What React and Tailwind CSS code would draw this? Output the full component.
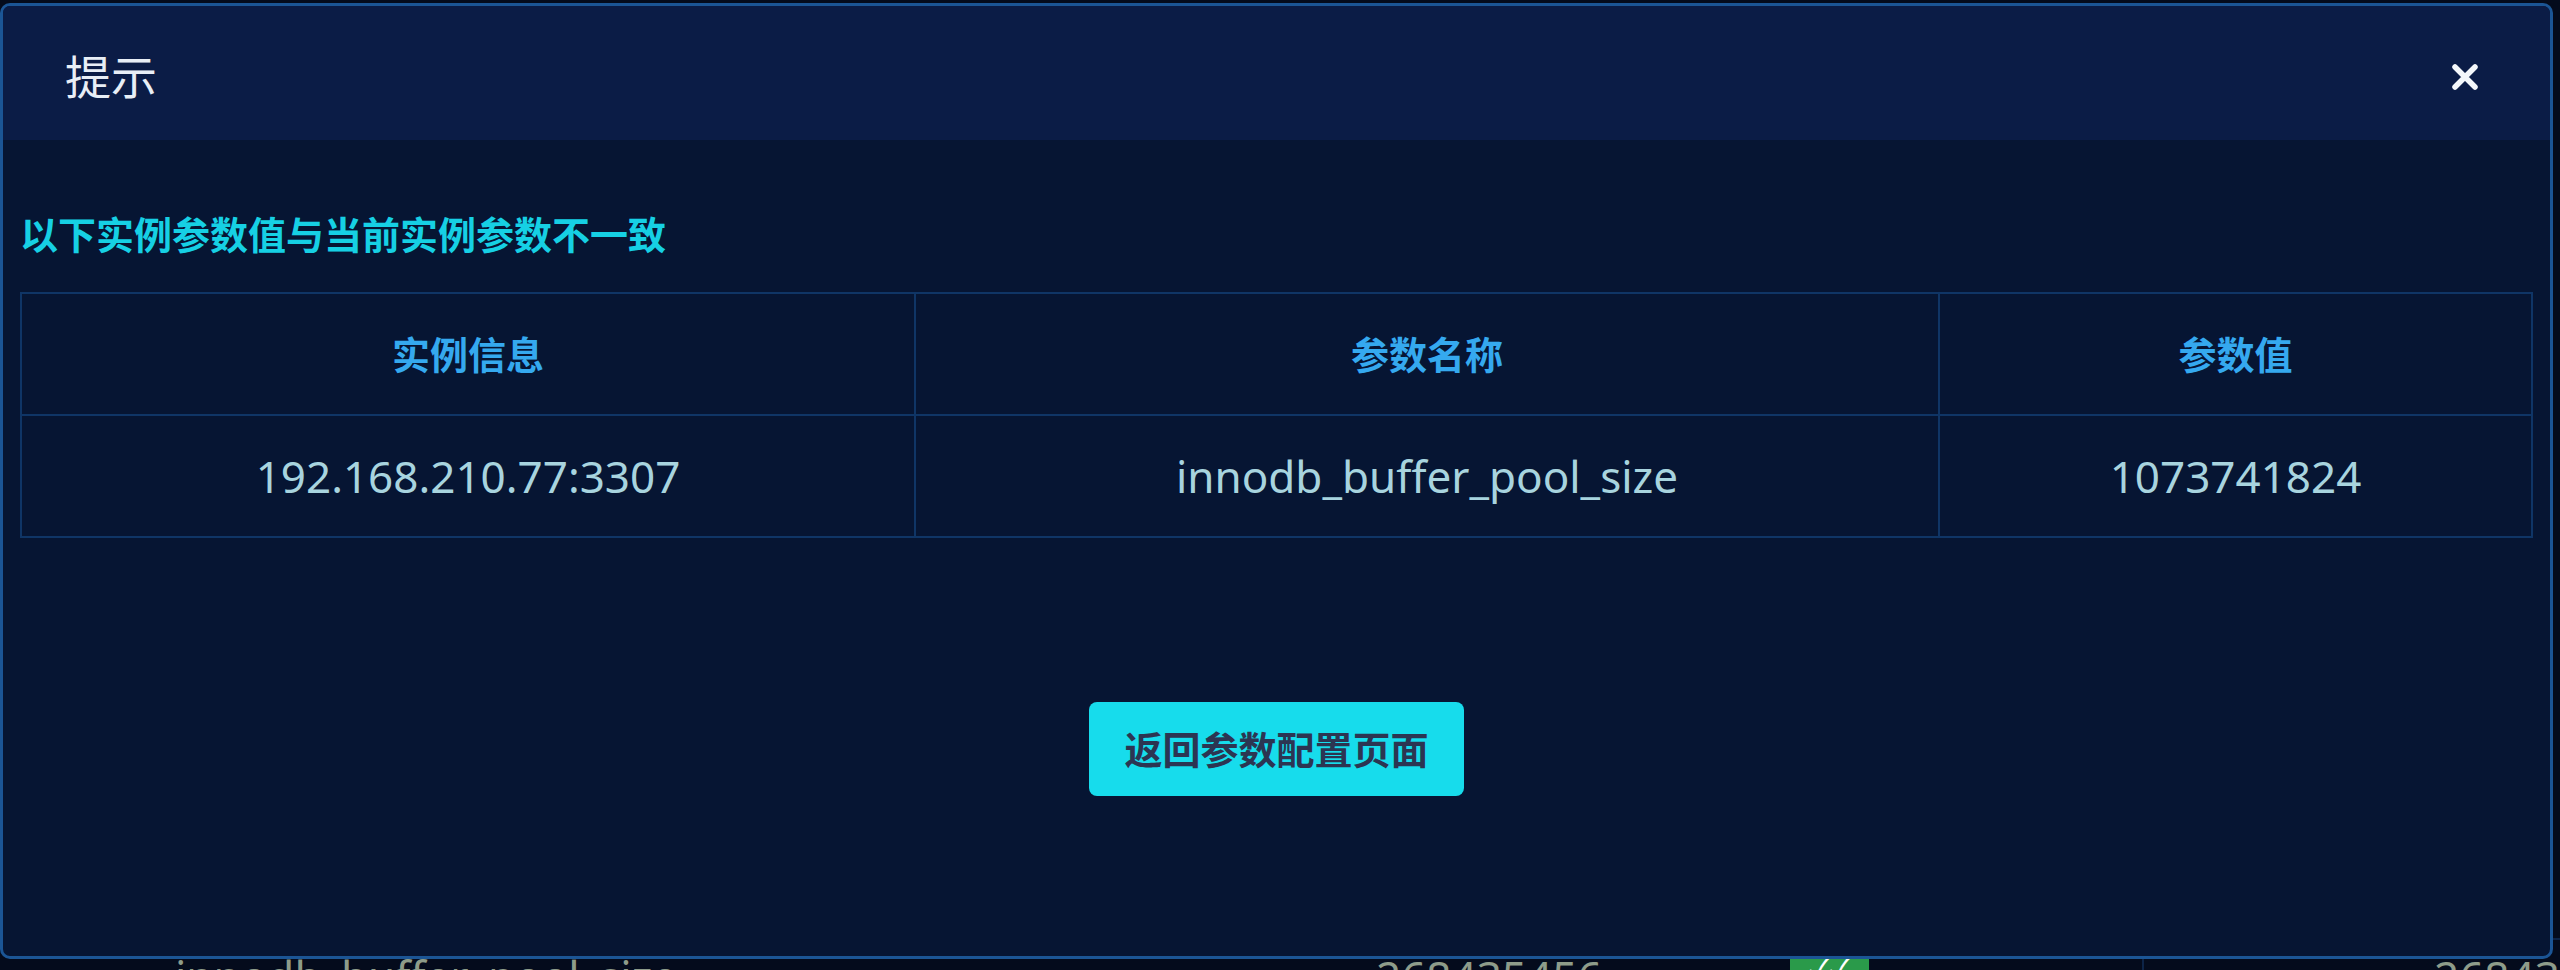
import React from "react";

const rows = [
  { instance: "192.168.210.77:3307", name: "innodb_buffer_pool_size", value: "1073741824" },
];

const CloseIcon = () => (
  <svg width="30" height="30" viewBox="0 0 30 30" fill="none">
    <path d="M5 5 L25 25 M25 5 L5 25" stroke="#f4f7fb" strokeWidth="5.5" strokeLinecap="round" />
  </svg>
);

const App = () => {
  return (
    <div
      className="relative w-[2560px] h-[970px] overflow-hidden bg-[#040b1c]"
      style={{ fontFamily: '"Noto Sans", "Noto Sans CJK SC", sans-serif' }}
    >
      {/* page underneath the dialog */}
      <div className="flex flex-col">
        <div className="h-[938px]" />
        <div className="flex items-start h-[80px] border-t-2 border-[#0d2447] text-[44px] text-[#8e9c8a] leading-none">
          <div className="shrink-0 w-[1160px] pl-[175px] pt-[14px]">innodb_buffer_pool_size</div>
          <div className="shrink-0 w-[630px] pl-[216px] pt-[14px]">268435456</div>
          <div className="shrink-0 w-[352px] pt-[14px]">
            <div className="w-[79px] h-[50px] bg-[#2a9a4a] rounded-[3px] text-white text-[30px] text-center">✓✓</div>
          </div>
          <div className="shrink-0 h-[60px] border-l-2 border-[#0d2447]" />
          <div className="shrink-0 pl-[290px] pt-[14px]">268435456</div>
        </div>
      </div>

      {/* dialog */}
      <div className="absolute left-0 top-[3px] w-[2553px] h-[956px] flex flex-col border-[3px] border-[#1b5595] rounded-[10px] bg-[#061533] overflow-hidden">
        <div className="h-[134px] shrink-0 flex items-center justify-between pl-[62px] pr-[70px] bg-[#0b1c46]">
          <span className="text-[46px] text-[#e8eef6] leading-none pt-[6px]">提示</span>
          <button className="pt-[8px]">
            <CloseIcon />
          </button>
        </div>

        <div className="flex flex-col pl-[17px] pr-[17px]">
          <div className="mt-[68px] text-[38px] leading-[52px] font-bold text-[#16d0e4]">
            以下实例参数值与当前实例参数不一致
          </div>

          <table className="mt-[32px] w-[2513px] border-collapse border-2 border-[#0f3566] table-fixed">
            <thead>
              <tr className="h-[122px]">
                <th className="w-[894px] border-2 border-[#0f3566] text-[38px] font-bold text-[#35a9ef]">实例信息</th>
                <th className="w-[1024px] border-2 border-[#0f3566] text-[38px] font-bold text-[#35a9ef]">参数名称</th>
                <th className="border-2 border-[#0f3566] text-[38px] font-bold text-[#35a9ef]">参数值</th>
              </tr>
            </thead>
            <tbody>
              {rows.map((r) => (
                <tr key={r.instance} className="h-[122px]">
                  <td className="border-2 border-[#0f3566] text-center text-[44px] text-[#a8d4df]">{r.instance}</td>
                  <td className="border-2 border-[#0f3566] text-center text-[44px] text-[#a8d4df]">{r.name}</td>
                  <td className="border-2 border-[#0f3566] text-center text-[44px] text-[#a8d4df]">{r.value}</td>
                </tr>
              ))}
            </tbody>
          </table>

          <div className="flex justify-center mt-[164px]">
            <button className="w-[375px] h-[94px] rounded-[8px] bg-[#17dcec] text-[38px] font-bold text-[#2c3552]">
              返回参数配置页面
            </button>
          </div>
        </div>
      </div>
    </div>
  );
};

export default App;
